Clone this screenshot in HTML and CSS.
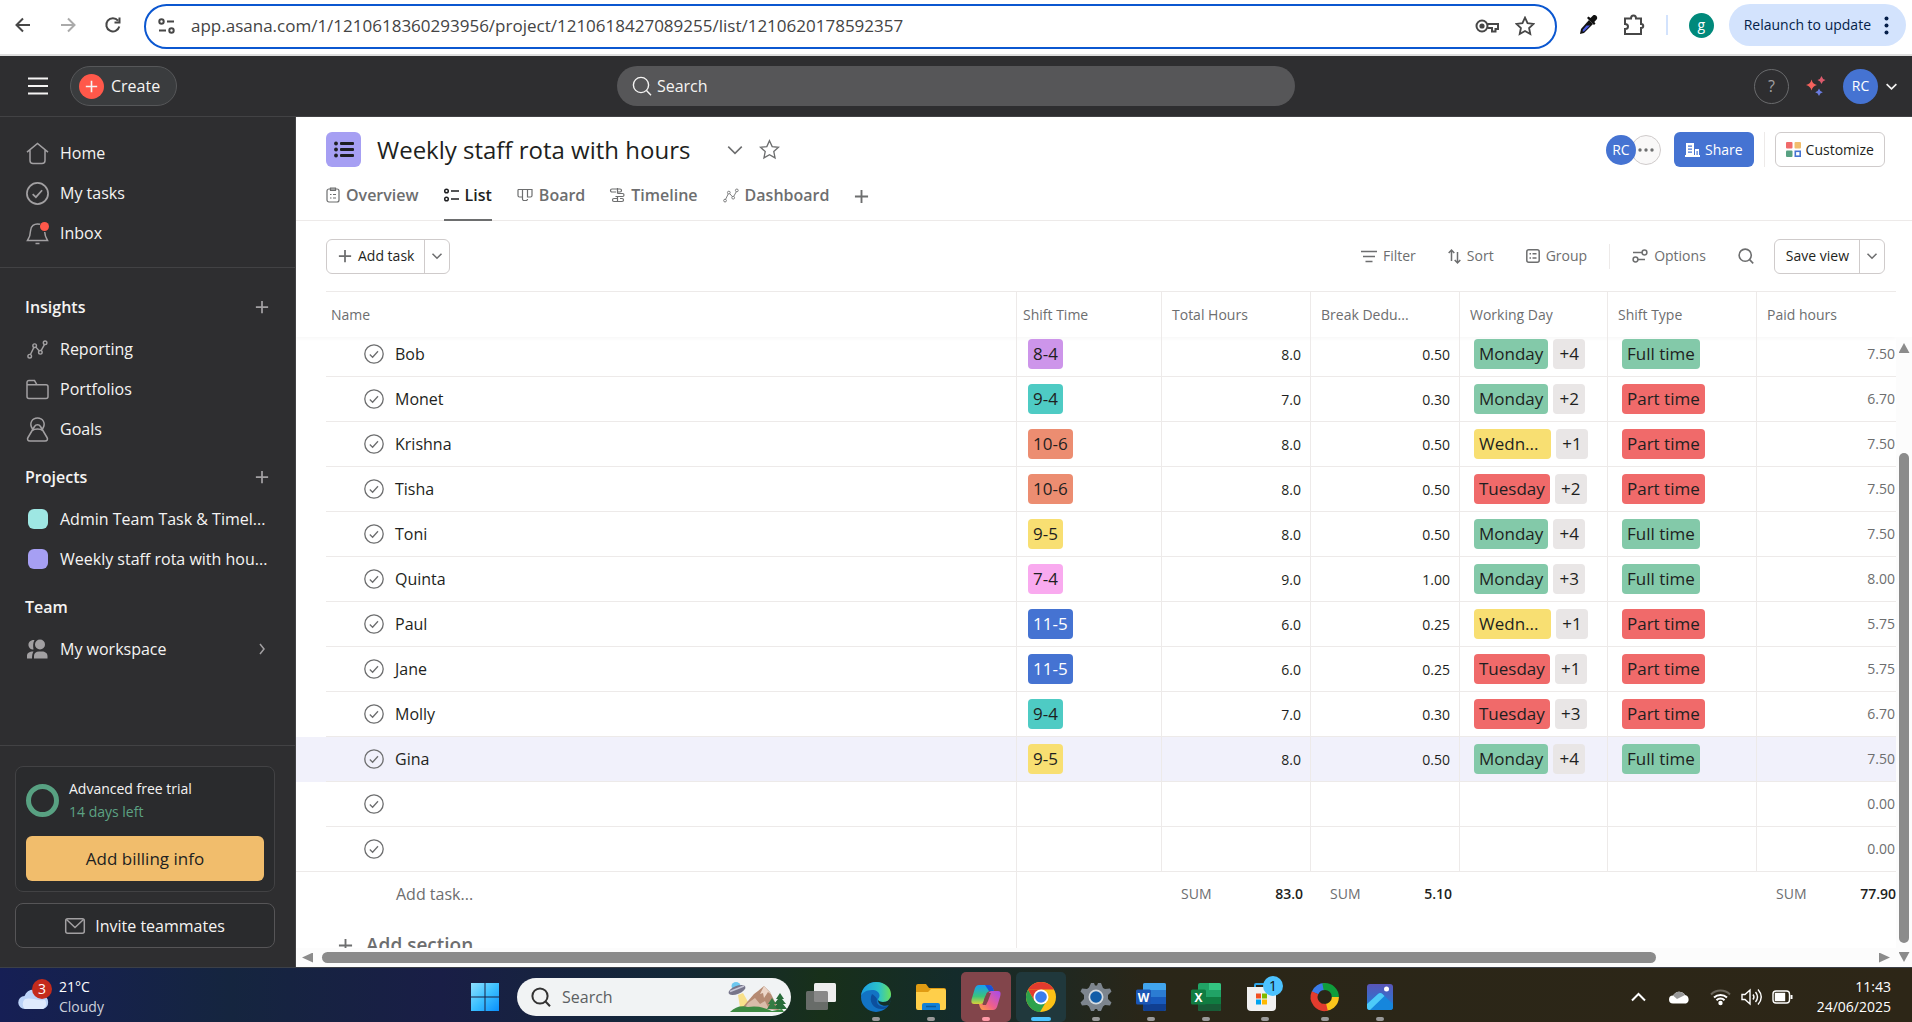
FILE: index.html
```html
<!DOCTYPE html>
<html lang="en">
<head>
<meta charset="utf-8">
<title>Weekly staff rota with hours - Asana</title>
<link rel="stylesheet" href="styles.css">
</head>
<body>
<svg class="defs" aria-hidden="true">
  <symbol id="check" viewBox="0 0 20 20"><circle cx="10" cy="10" r="9.2"/><path d="M5.8 10.600l2.800 2.600 5.400-6"/></symbol>
  <symbol id="plus" viewBox="0 0 16 16"><path d="M8 1v14M1 8h14"/></symbol>
  <symbol id="chev" viewBox="0 0 16 16"><path d="M2 5l6 6 6-6"/></symbol>
  <symbol id="lens" viewBox="0 0 20 20"><circle cx="9" cy="9" r="7.6"/><path d="M14.500 14.500l4.500 4.700"/></symbol>
  <symbol id="star" viewBox="0 0 22 22"><path d="M11 1.800l2.800 6.100 6.600.8-4.900 4.500 1.300 6.600-5.800-3.300-5.800 3.300 1.300-6.600L1.600 8.700l6.600-.8z"/></symbol>
  <symbol id="chart" viewBox="0 0 22 20"><circle cx="2.800" cy="17" r="1.900"/><circle cx="8" cy="6" r="1.900"/><circle cx="14" cy="13" r="1.900"/><circle cx="19" cy="3" r="1.900"/><path d="M3.600 15.200l3.600-7.400M9.300 7.500l3.600 4.100M14.800 11.200l3.500-6.400"/></symbol>
</svg>

<header class="browser">
  <button class="ib" aria-label="Back"><svg width="16" height="16" viewBox="0 0 16 16" class="s2"><path d="M15 8H2M8 1.500L1.500 8 8 14.500"/></svg></button>
  <button class="ib dim" aria-label="Forward"><svg width="16" height="16" viewBox="0 0 16 16" class="s2"><path d="M1 8h13M8 1.500L14.500 8 8 14.500"/></svg></button>
  <button class="ib" aria-label="Reload"><svg width="16" height="16" viewBox="0 0 16 16" class="s2"><path d="M14.300 9.500A6.600 6.600 0 1 1 13 3.600M14.500.5v5h-5"/></svg></button>
  <div class="omnibox">
    <svg width="17" height="16" viewBox="0 0 17 16" class="s2"><circle cx="3.500" cy="3.500" r="2.200"/><path d="M9 3.500h7M1 12.500h7"/><circle cx="13.500" cy="12.500" r="2.200"/></svg>
    <input type="text" aria-label="Address" value="app.asana.com/1/1210618360293956/project/1210618427089255/list/1210620178592357">
    <button class="ib" aria-label="Passwords"><svg width="24" height="16" viewBox="0 0 24 16" class="s2"><circle cx="7" cy="8" r="5.500"/><circle cx="7" cy="8" r="1.600" fill="#444"/><path d="M12.500 6H23v5h-2.500v2.500H17V10h-4.500"/></svg></button>
    <button class="ib" aria-label="Bookmark"><svg width="20" height="20" class="s2"><use href="#star"/></svg></button>
  </div>
  <button class="ib picker" aria-label="Color picker"><svg width="20" height="22" viewBox="0 0 20 22"><path d="M2 20l1-5 8-9 4 4-9 9z" fill="#111"/><path d="M4.500 17.500l.5-2 3.500-4 3.500 0-6 6z" fill="#4a5be0"/><path d="M9 4l7 7 1.500-1.500-1.200-1.500L19 5c1-2-1.500-5-4-3.500L12.500 4 10.500 2.500z" fill="#111"/></svg></button>
  <button class="ib" aria-label="Extensions"><svg width="22" height="22" viewBox="0 0 22 22" class="s2"><path d="M2 4.500h6c0-4 5-4 5 0h5v5.500c3 0 3 4 0 4V20H2v-5c4 0 4-5 0-5z"/></svg></button>
  <span class="bar"></span>
  <button class="gava">g</button>
  <button class="relaunch">Relaunch to update<svg width="5" height="19" viewBox="0 0 5 19"><circle cx="2.500" cy="2.500" r="2"/><circle cx="2.500" cy="9.500" r="2"/><circle cx="2.500" cy="16.500" r="2"/></svg></button>
</header>

<div class="topbar">
  <div class="top-left">
    <button class="ib" aria-label="Menu"><svg width="20" height="18" viewBox="0 0 20 18" class="s2"><path d="M0 1.500h20M0 9h20M0 16.500h20"/></svg></button>
    <button class="create"><span><svg width="13" height="13" class="s2"><use href="#plus"/></svg></span>Create</button>
  </div>
  <label class="search"><svg width="20" height="20" class="s1"><use href="#lens"/></svg><input type="text" placeholder="Search" aria-label="Search"></label>
  <div class="top-right">
    <button class="help">?</button>
    <button class="ib" aria-label="AI"><svg width="20" height="20" viewBox="0 0 20 20"><path d="M5.500 3.500q1 4.500 5.500 5.500-4.500 1-5.500 5.500-1-4.500-5.500-5.500 4.500-1 5.500-5.500z" fill="#f5625d"/><path d="M15.500 0q.8 3.200 4 4-3.200.8-4 4-.8-3.200-4-4 3.200-.8 4-4z" fill="#dc5b6c"/><path d="M13 12.500q.8 3 3.800 3.800-3 .8-3.800 3.700-.8-2.900-3.800-3.700 3-.8 3.800-3.800z" fill="#6a7ce0"/></svg></button>
    <button class="ava big">RC</button>
    <svg width="13" height="13" class="s2"><use href="#chev"/></svg>
  </div>
</div>

<div class="app">
  <aside class="sidebar">
    <nav class="primary">
      <a href="#"><svg width="23" height="23" viewBox="0 0 23 23"><path d="M1 10.200L11.500 1.500 22 10.200M4 8v10.500a3 3 0 0 0 3 3h9a3 3 0 0 0 3-3V8"/></svg>Home</a>
      <a href="#"><svg width="23" height="23"><use href="#check"/></svg>My tasks</a>
      <a href="#"><svg width="23" height="23" viewBox="0 0 23 23"><path d="M14 2.300C8 .8 4.500 4.500 4.500 9c0 4-.5 5.500-3 9.500h20c-1.800-3-2.700-5-2.800-8.500M9.500 21.500h4"/><circle cx="18.500" cy="4.500" r="4.500" class="dot"/></svg>Inbox</a>
    </nav>
    <nav class="groups">
      <h2>Insights<button class="ib" aria-label="Add insight"><svg width="14" height="14" class="s2"><use href="#plus"/></svg></button></h2>
      <a href="#"><svg width="23" height="19"><use href="#chart"/></svg>Reporting</a>
      <a href="#"><svg width="23" height="21" viewBox="0 0 23 21"><path d="M1 17.500V3.500a2 2 0 0 1 2-2h5.500l2.500 4.300h9a2 2 0 0 1 2 2v9.700a2 2 0 0 1-2 2H3a2 2 0 0 1-2-2zM1 5.800h10"/></svg>Portfolios</a>
      <a href="#"><svg width="23" height="25" viewBox="0 0 23 25"><path d="M6.500 12C2.500 6 6.500 1 11.500 1S20.500 6 16.500 12M4 24c-2.500 0-3-1.800-2-3.500L8.500 9.500a3.500 3.500 0 0 1 6 0L21 20.500c1 1.700.5 3.500-2 3.500zM6.500 13.500c2-2 8-2 10 0"/></svg>Goals</a>
      <h2>Projects<button class="ib" aria-label="Add project"><svg width="14" height="14" class="s2"><use href="#plus"/></svg></button></h2>
      <a href="#"><i class="sw teal"></i><span>Admin Team Task &amp; Timel...</span></a>
      <a href="#"><i class="sw violet"></i><span>Weekly staff rota with hou...</span></a>
      <h2>Team</h2>
      <a href="#"><svg width="23" height="20" viewBox="0 0 23 20" class="solid"><circle cx="14" cy="5.500" r="5"/><path d="M8 1C0 1 1.500 11 7.500 10.500 7 8 6.800 3.500 8.500 1zM8 19.500V17c0-3 2-4.500 5-4.500h3c3 0 5.500 1.500 5.500 4.500v2.500zM1 19.500V17c0-3 2-4.500 6.500-4.500Q6 14.500 6 19.500z"/></svg>My workspace<svg width="14" height="14" viewBox="0 0 14 14" class="go s2"><path d="M5 2l4 5-4 5"/></svg></a>
    </nav>
    <div class="side-foot">
      <div class="trial">
        <div class="trial-top"><i class="ring"></i><p>Advanced free trial<small>14 days left</small></p></div>
        <button>Add billing info</button>
      </div>
      <button class="invite"><svg width="20" height="16" viewBox="0 0 20 16"><rect x=".7" y=".7" width="18.600" height="14.600" rx="2"/><path d="M1.500 1.500L10 9.500l8.500-8"/></svg>Invite teammates</button>
    </div>
  </aside>

  <main>
    <div class="head">
      <span class="picon"><svg width="20" height="17" viewBox="0 0 20 17"><circle cx="2" cy="2.500" r="1.900"/><circle cx="2" cy="8.500" r="1.900"/><circle cx="2" cy="14.500" r="1.900"/><rect x="6" y="1" width="14" height="3" rx="1"/><rect x="6" y="7" width="14" height="3" rx="1"/><rect x="6" y="13" width="14" height="3" rx="1"/></svg></span>
      <h1>Weekly staff rota with hours</h1>
      <button class="ib drop" aria-label="Project menu"><svg width="18" height="18" class="s1"><use href="#chev"/></svg></button>
      <button class="ib" aria-label="Favourite"><svg width="21" height="21" class="s1"><use href="#star"/></svg></button>
      <div class="people"><span class="ava">RC</span><button class="more" aria-label="More members"><svg width="16" height="4" viewBox="0 0 16 4"><circle cx="2" cy="2" r="1.700"/><circle cx="8" cy="2" r="1.700"/><circle cx="14" cy="2" r="1.700"/></svg></button></div>
      <button class="share"><svg width="15" height="14" viewBox="0 0 15 14"><path fill="#fff" fill-rule="evenodd" d="M1 0h8v12h1V6h4v6h1v2H0v-2h1zM3 2.500v1.300h4V2.500zM3 5.500v1.300h4V5.500zM3 8.500v1.300h4V8.500zM11.500 8v4h1.200V8z"/></svg>Share</button>
      <span class="sep tall"></span>
      <button class="btn customize"><svg width="15" height="15" viewBox="0 0 15 15"><rect width="6.500" height="6.500" rx="1" fill="#f06a6a"/><rect x="8.500" width="6.500" height="6.500" rx="1" fill="#f1bd6c"/><rect y="8.500" width="6.500" height="6.500" rx="1" fill="#58a182"/><rect x="9.300" y="9.300" width="4.900" height="4.900" fill="none" stroke="#4573d2" stroke-width="1.600"/></svg>Customize</button>
    </div>
    <nav class="tabs">
      <a href="#"><svg width="14" height="16" viewBox="0 0 14 16"><rect x="1" y="2" width="12" height="13" rx="2"/><path d="M4.500 3.300V1h5v2.300zM4 7.500h1.500M7 7.500h3M4 11h1.500M7 11h3"/></svg>Overview</a>
      <a href="#" class="on"><svg width="15" height="14" viewBox="0 0 15 14"><circle cx="2.500" cy="3" r="1.800"/><circle cx="2.500" cy="11" r="1.800"/><path d="M7 3h8M7 11h8"/></svg>List</a>
      <a href="#"><svg width="16" height="14" viewBox="0 0 16 14"><path d="M1 1.500h14v6a1.500 1.500 0 0 1-1.500 1.500h-3V1.500M5.500 1.500v9.500A1.500 1.500 0 0 0 7 12.500h2a1.500 1.500 0 0 0 1.500-1.500M5.500 9h-3A1.500 1.500 0 0 1 1 7.500v-6"/></svg>Board</a>
      <a href="#"><svg width="15" height="14" viewBox="0 0 15 14"><path d="M6 4H2a1.400 1.400 0 0 1 0-3h8a1.400 1.400 0 0 1 0 3H8M7.500 0v5.500M7.500 5.500h5a1.400 1.400 0 0 1 0 3h-7M7.500 8.500V14M7.500 10.500H4a1.400 1.400 0 0 0 0 3h8a1.400 1.400 0 0 0 0-3h-2"/></svg>Timeline</a>
      <a href="#"><svg width="16" height="15"><use href="#chart"/></svg>Dashboard</a>
      <button class="ib" aria-label="Add tab"><svg width="15" height="15" class="s2"><use href="#plus"/></svg></button>
    </nav>
    <div class="tools">
      <div class="split"><button><svg width="14" height="14" class="s2"><use href="#plus"/></svg>Add task</button><button class="arrow" aria-label="Add task options"><svg width="12" height="12" class="s2"><use href="#chev"/></svg></button></div>
      <div class="filters">
        <button><svg width="16" height="13" viewBox="0 0 16 13"><path d="M0 1.500h16M2 6.500h12M4.500 11.500h7"/></svg>Filter</button>
        <button><svg width="13" height="15" viewBox="0 0 13 15"><path d="M3.500 12V1.500M.7 4L3.500 1l2.800 3M9.500 3v10.500M6.700 11l2.800 3 2.800-3"/></svg>Sort</button>
        <button><svg width="14" height="14" viewBox="0 0 14 14"><rect x=".8" y=".8" width="12.400" height="12.400" rx="2"/><path d="M3.500 4.800H5M6.500 4.800h4M3.500 9H5M6.500 9h4"/></svg>Group</button>
        <span class="sep"></span>
        <button><svg width="16" height="14" viewBox="0 0 16 14"><circle cx="12.500" cy="3.500" r="2.400"/><path d="M1 3.500h9"/><circle cx="3.500" cy="10.500" r="2.400"/><path d="M6 10.500h7"/></svg>Options</button>
        <button aria-label="Search tasks"><svg width="16" height="16" class="heavy"><use href="#lens"/></svg></button>
      </div>
      <div class="split"><button>Save view</button><button class="arrow" aria-label="Save view options"><svg width="12" height="12" class="s2"><use href="#chev"/></svg></button></div>
    </div>

    <div class="pane">
      <div class="list">
        <table>
          <colgroup><col class="c-gut"><col><col class="c-shift"><col class="c-w"><col class="c-w"><col class="c-day"><col class="c-w"><col class="c-paid"></colgroup>
          <thead><tr><th class="gut"></th><th class="name">Name</th><th class="shift">Shift Time</th><th>Total Hours</th><th>Break Dedu...</th><th>Working Day</th><th>Shift Type</th><th>Paid hours</th></tr></thead>
          <tbody>
            <tr class="under"><td class="gut"></td><td class="name"><div><button class="tick" aria-label="Complete"><svg><use href="#check"/></svg></button>Bob</div></td><td><b class="tag purple">8-4</b></td><td class="num">8.0</td><td class="num">0.50</td><td class="day"><b class="tag green">Monday</b><b class="tag grey">+4</b></td><td class="day"><b class="tag green">Full time</b></td><td class="paid">7.50</td></tr>
            <tr><td class="gut"></td><td class="name"><div><button class="tick" aria-label="Complete"><svg><use href="#check"/></svg></button>Monet</div></td><td><b class="tag aqua">9-4</b></td><td class="num">7.0</td><td class="num">0.30</td><td class="day"><b class="tag green">Monday</b><b class="tag grey">+2</b></td><td class="day"><b class="tag red">Part time</b></td><td class="paid">6.70</td></tr>
            <tr><td class="gut"></td><td class="name"><div><button class="tick" aria-label="Complete"><svg><use href="#check"/></svg></button>Krishna</div></td><td><b class="tag orange">10-6</b></td><td class="num">8.0</td><td class="num">0.50</td><td class="day"><b class="tag yellow cut">Wedn...</b><b class="tag grey">+1</b></td><td class="day"><b class="tag red">Part time</b></td><td class="paid">7.50</td></tr>
            <tr><td class="gut"></td><td class="name"><div><button class="tick" aria-label="Complete"><svg><use href="#check"/></svg></button>Tisha</div></td><td><b class="tag orange">10-6</b></td><td class="num">8.0</td><td class="num">0.50</td><td class="day"><b class="tag red">Tuesday</b><b class="tag grey">+2</b></td><td class="day"><b class="tag red">Part time</b></td><td class="paid">7.50</td></tr>
            <tr><td class="gut"></td><td class="name"><div><button class="tick" aria-label="Complete"><svg><use href="#check"/></svg></button>Toni</div></td><td><b class="tag yellow">9-5</b></td><td class="num">8.0</td><td class="num">0.50</td><td class="day"><b class="tag green">Monday</b><b class="tag grey">+4</b></td><td class="day"><b class="tag green">Full time</b></td><td class="paid">7.50</td></tr>
            <tr><td class="gut"></td><td class="name"><div><button class="tick" aria-label="Complete"><svg><use href="#check"/></svg></button>Quinta</div></td><td><b class="tag pink">7-4</b></td><td class="num">9.0</td><td class="num">1.00</td><td class="day"><b class="tag green">Monday</b><b class="tag grey">+3</b></td><td class="day"><b class="tag green">Full time</b></td><td class="paid">8.00</td></tr>
            <tr><td class="gut"></td><td class="name"><div><button class="tick" aria-label="Complete"><svg><use href="#check"/></svg></button>Paul</div></td><td><b class="tag blue">11-5</b></td><td class="num">6.0</td><td class="num">0.25</td><td class="day"><b class="tag yellow cut">Wedn...</b><b class="tag grey">+1</b></td><td class="day"><b class="tag red">Part time</b></td><td class="paid">5.75</td></tr>
            <tr><td class="gut"></td><td class="name"><div><button class="tick" aria-label="Complete"><svg><use href="#check"/></svg></button>Jane</div></td><td><b class="tag blue">11-5</b></td><td class="num">6.0</td><td class="num">0.25</td><td class="day"><b class="tag red">Tuesday</b><b class="tag grey">+1</b></td><td class="day"><b class="tag red">Part time</b></td><td class="paid">5.75</td></tr>
            <tr><td class="gut"></td><td class="name"><div><button class="tick" aria-label="Complete"><svg><use href="#check"/></svg></button>Molly</div></td><td><b class="tag aqua">9-4</b></td><td class="num">7.0</td><td class="num">0.30</td><td class="day"><b class="tag red">Tuesday</b><b class="tag grey">+3</b></td><td class="day"><b class="tag red">Part time</b></td><td class="paid">6.70</td></tr>
            <tr class="sel"><td class="gut"></td><td class="name"><div><button class="tick" aria-label="Complete"><svg><use href="#check"/></svg></button>Gina</div></td><td><b class="tag yellow">9-5</b></td><td class="num">8.0</td><td class="num">0.50</td><td class="day"><b class="tag green">Monday</b><b class="tag grey">+4</b></td><td class="day"><b class="tag green">Full time</b></td><td class="paid">7.50</td></tr>
            <tr><td class="gut"></td><td class="name"><div><button class="tick" aria-label="Complete"><svg><use href="#check"/></svg></button></div></td><td></td><td></td><td></td><td></td><td></td><td class="paid">0.00</td></tr>
            <tr class="last"><td class="gut"></td><td class="name"><div><button class="tick" aria-label="Complete"><svg><use href="#check"/></svg></button></div></td><td></td><td></td><td></td><td></td><td></td><td class="paid">0.00</td></tr>
          </tbody>
          <tfoot>
            <tr><td class="gut"></td><td class="name"><button class="addtask">Add task...</button></td><td></td><td class="sum"><div><span>SUM</span>83.0</div></td><td class="sum"><div><span>SUM</span>5.10</div></td><td></td><td></td><td class="sum edge"><div><span>SUM</span>77.90</div></td></tr>
            <tr class="section"><td class="gut"></td><td class="name"><button class="addsec"><svg width="15" height="15" class="s2"><use href="#plus"/></svg>Add section</button></td><td colspan="6"></td></tr>
          </tfoot>
        </table>
      </div>
      <div class="vbar"><i class="tri up"></i><i class="vthumb"></i><i class="tri down"></i></div>
      <div class="hbar"><i class="tri left"></i><i class="hthumb"></i><i class="tri right"></i></div>
    </div>
  </main>
</div>

<footer class="taskbar">
  <div class="weather">
    <svg width="34" height="32" viewBox="0 0 34 32"><path d="M7 28a6.500 6.500 0 0 1-.5-13A10 10 0 0 1 25 14.500 7 7 0 0 1 25 28z" fill="#bcd3f8"/><path d="M7 28a6.500 6.500 0 0 1 0-10c6-2 12 2 20 1a6 6 0 0 1-2 9z" fill="#dfeafd"/><circle cx="24" cy="8" r="10" fill="#c42b1c"/><text x="24" y="13" text-anchor="middle" fill="#fff" font-size="14">3</text></svg>
    <p>21°C<small>Cloudy</small></p>
  </div>
  <div class="dock">
    <button aria-label="Start"><svg width="30" height="30" viewBox="0 0 30 30"><defs><linearGradient id="win" x2="1" y2="1"><stop stop-color="#8fe0ff"/><stop offset=".5" stop-color="#3cc0ff"/><stop offset="1" stop-color="#0a8ffc"/></linearGradient></defs><path fill="url(#win)" d="M1 1h13.500v13.500H1zM15.500 1H29v13.500H15.500zM1 15.500h13.500V29H1zM15.500 15.500H29V29H15.500z"/></svg></button>
    <label class="tsearch"><svg width="20" height="20" class="s2"><use href="#lens"/></svg><input type="text" placeholder="Search" aria-label="Search Windows">
      <svg width="59" height="32" viewBox="0 0 59 32"><path d="M10 14l5-2 8 14H12z" fill="#f8e08a"/><path d="M14 27L26 13l4-3 6-5 6 6 9 18z" fill="#b58a72"/><path d="M36 5l-4 8 3-1 1 5 4-6 4 3z" fill="#ecd6c8"/><path d="M20 22l7-5 5 6 5-3 4 8H16z" fill="#d9bca9"/><path d="M2 31q8-8 18-5 12-2 24 4l10-2 2 3z" fill="#3d8a42"/><path d="M52 12l-4 6h2l-4 5h3l-4 5h14l-4-5h3l-4-5h2z" fill="#276b39"/><path d="M44 17l-4 6h2l-3 5h10l-3-5h2z" fill="#347c43"/><ellipse cx="8" cy="5" rx="4.500" ry="4" fill="#6cc7ef"/><ellipse cx="9" cy="9" rx="9" ry="4" transform="rotate(-22 9 9)" fill="#77758a"/><path d="M2 10.500L16 5" stroke="#c9c8d8" stroke-width="1.500"/></svg></label>
    <button aria-label="Task view"><svg width="32" height="30" viewBox="0 0 32 30"><rect x="9" y="1" width="22" height="19" rx="1.500" fill="#eee"/><rect x="1" y="9" width="22" height="19" rx="1.500" fill="#777" opacity=".85"/></svg></button>
    <button class="run" aria-label="Edge"><svg width="30" height="30" viewBox="0 0 30 30"><defs><linearGradient id="edge" x2="1"><stop stop-color="#1b9de2"/><stop offset=".6" stop-color="#2cc3c9"/><stop offset="1" stop-color="#6be05a"/></linearGradient></defs><circle cx="15" cy="15" r="15" fill="#1273c4"/><path d="M0 14C1 5 8 0 15 0c9 0 15 6 15 12 0 5-3 8-8 8-3 0-5-1-5-2.500 0-1 1.500-1.500 1.500-4C18.500 10 15 8 11 8 5 8 1 11 0 14z" fill="url(#edge)"/><path d="M11 12c-4 8 2 16 11 15 3-.5 5-2.500 6-4-4 3-14 2-12-6-1-2-3-4-5-5z" fill="#0c4f9e"/><path d="M17 17.500c0 1.500 2 2.500 5 2.500 4 0 6.500-2 7.500-5l1 3-2.500 5c-5 2-11 0-11-5.500z" fill="#14302a"/></svg></button>
    <button class="run" aria-label="File Explorer"><svg width="32" height="28" viewBox="0 0 32 28"><path d="M1 3a2 2 0 0 1 2-2h8l3 4h15a2 2 0 0 1 2 2v5H1z" fill="#e09b12"/><path d="M1 9h12l3-3h13a2 2 0 0 1 2 2v17a2 2 0 0 1-2 2H3a2 2 0 0 1-2-2z" fill="#ffcf4a"/><path d="M7 27v-5a2 2 0 0 1 2-2h14a2 2 0 0 1 2 2v5z" fill="#1180d8"/><path d="M11 23.500h10" stroke="#0b5a9c" stroke-width="1.500"/></svg></button>
    <button class="run tile rose" aria-label="Copilot"><svg width="30" height="27" viewBox="0 0 30 27"><defs><linearGradient id="cpa" x2="0" y2="1"><stop stop-color="#179ef5"/><stop offset=".6" stop-color="#3ac47b"/><stop offset="1" stop-color="#d9d13a"/></linearGradient><linearGradient id="cpb" x1="1" x2="0" y2="1"><stop stop-color="#a44af0"/><stop offset=".6" stop-color="#f0608a"/><stop offset="1" stop-color="#ffa53c"/></linearGradient></defs><path d="M8 1h10c3 0 4 3 5 6h-3c-3 0-4 1-5 4l-2 6c-1 3-2 3-4 3H3c-3 0-3-3-2-6L4 4c1-2 2-3 4-3z" fill="url(#cpa)"/><path d="M22 26H12c-2 0-3-2-4-6h2c3 0 4-1 5-4l2-6c1-2 2-3 4-3h6c3 0 3 3 2 6l-3 10c-1 2-2 3-4 3z" fill="url(#cpb)"/><path d="M14 1h4c3 0 4 3 5 6h-5z" fill="#1c50d8"/><path d="M13.500 14l2.500-5h4l-3 8-2 4h-3.500z" fill="#82454b"/></svg></button>
    <button class="run tile active" aria-label="Chrome"><svg width="30" height="30" viewBox="0 0 30 30"><circle cx="15" cy="15" r="15" fill="#fbc116"/><path d="M2 7.500A15 15 0 0 1 28 7.500H15z" fill="#e33b2e"/><path d="M2 7.500A15 15 0 0 0 14 30l6.500-11L8.500 18.700z" fill="#2da24c"/><path d="M2 7.500l6.500 11.200L15 7.500z" fill="#e33b2e"/><circle cx="15" cy="15" r="7.500" fill="#fff"/><circle cx="15" cy="15" r="5.800" fill="#3b7ded"/></svg></button>
    <button class="run" aria-label="Settings"><svg width="30" height="30" viewBox="0 0 30 30"><path d="M11 1h2l1 2.500h2L17 1h3l2 5 2 1 5-.5 1.500 3L27 13v4l3.500 3.500-1.500 3-5-.5-2 1.500-2 4.500h-3l-1-2h-2l-1 2h-3l-2-4.500L6 23l-5 .5-1.500-3L3 17v-4L-.5 9.500 1 6.500 6 7l2-1.500L10 1z" fill="#7d858e"/><circle cx="15" cy="15" r="7.500" fill="#d5dbe0"/><circle cx="15" cy="15" r="5.800" fill="#125da8"/></svg></button>
    <button class="run" aria-label="Word"><svg width="30" height="28" viewBox="0 0 30 28"><rect x="7" width="23" height="28" rx="2" fill="#2b7cd3"/><path d="M7 2a2 2 0 0 1 2-2h19a2 2 0 0 1 2 2v5H7z" fill="#41a5ee"/><path d="M7 14h23v7H7z" fill="#185abd"/><path d="M7 21h23v5a2 2 0 0 1-2 2H9a2 2 0 0 1-2-2z" fill="#103f91"/><rect y="6.500" width="15" height="15" rx="1.500" fill="#1b56b5"/><text x="7.500" y="18.500" text-anchor="middle" fill="#fff" font-size="12" font-weight="700">W</text></svg></button>
    <button class="run" aria-label="Excel"><svg width="30" height="28" viewBox="0 0 30 28"><rect x="7" width="23" height="28" rx="2" fill="#21a366"/><path d="M18 0h10a2 2 0 0 1 2 2v5H18z" fill="#33c481"/><path d="M7 14h23v7H7z" fill="#107c41"/><path d="M7 21h23v5a2 2 0 0 1-2 2H9a2 2 0 0 1-2-2z" fill="#185c37"/><rect y="6.500" width="15" height="15" rx="1.500" fill="#107c41"/><text x="7.500" y="18.500" text-anchor="middle" fill="#fff" font-size="12" font-weight="700">X</text></svg></button>
    <button class="run wide" aria-label="Microsoft Store"><svg width="38" height="36" viewBox="0 0 38 36"><path d="M9 12V9a1 1 0 0 1 1-1h12" fill="none" stroke="#2ea6ea" stroke-width="2"/><path d="M1 11h29v20a4 4 0 0 1-4 4H5a4 4 0 0 1-4-4z" fill="#f1f1f1"/><path fill="#f25022" d="M10 17.500h5v5h-5z"/><path fill="#7fba00" d="M16 17.500h5v5h-5z"/><path fill="#00a4ef" d="M10 23.500h5v5h-5z"/><path fill="#ffb900" d="M16 23.500h5v5h-5z"/><circle cx="27" cy="10" r="10" fill="#4cc2ff"/><text x="27" y="15" text-anchor="middle" fill="#111" font-size="14">1</text></svg></button>
    <button class="run" aria-label="Web companion"><svg width="28" height="28" viewBox="0 0 28 28" fill="none" stroke-width="7"><path d="M4 10A10.500 10.500 0 0 1 14 3.500" stroke="#3a7be8"/><path d="M12 3.700A10.500 10.500 0 0 1 24.400 15" stroke="#0f9d3c"/><path d="M24.400 14A10.500 10.500 0 0 1 12 24.300" stroke="#fbc51b"/><path d="M16 24.300A10.500 10.500 0 0 1 4 9.800" stroke="#e23c2e"/></svg></button>
    <button class="run" aria-label="Photos"><svg width="26" height="26" viewBox="0 0 26 26"><defs><linearGradient id="ph" x2="0" y2="1"><stop stop-color="#5a55b8"/><stop offset="1" stop-color="#1c7fd8"/></linearGradient></defs><rect width="26" height="26" rx="3" fill="url(#ph)"/><path d="M0 20l11-10c1.500-1.500 3-1.500 4.500 0L26 20v3a3 3 0 0 1-3 3H3a3 3 0 0 1-3-3z" fill="#1686dc"/><path d="M0 20l11-10c1.500-1.500 3-1.500 4.500 0l2 2L3 26a3 3 0 0 1-3-3z" fill="#4dcaf8"/><circle cx="19.500" cy="5" r="2.500" fill="#fff"/></svg></button>
  </div>
  <div class="tray">
    <svg width="15" height="10" viewBox="0 0 15 10" class="s2"><path d="M1 8.500l6.500-6.500L14 8.500"/></svg>
    <svg width="21" height="14" viewBox="0 0 21 14"><path d="M4 13.500a4 4 0 0 1 0-8A7 7 0 0 1 16 5a4.500 4.500 0 0 1 1 8.500z" fill="#fff"/><path d="M4 5.500A7 7 0 0 1 16 5L8 9z" fill="#999"/></svg>
    <svg width="21" height="16" viewBox="0 0 21 16" class="s2"><path d="M1 5.500a13.500 13.500 0 0 1 19 0" opacity=".3"/><path d="M4 8.500a9.500 9.500 0 0 1 13 0M6.500 11.300a5.600 5.600 0 0 1 8 0"/><circle cx="10.500" cy="14" r="1.200" fill="#fff"/></svg>
    <svg width="21" height="18" viewBox="0 0 21 18" class="s1"><path d="M1 6.500h3L9 2v14l-5-4.500H1zM12 6.500q2 2.500 0 5M14.500 4q4 5 0 10M17 1.500q6.500 7.500 0 15"/></svg>
    <svg width="21" height="14" viewBox="0 0 21 14" class="s1"><rect x="1" y="1" width="16.500" height="12" rx="3"/><rect x="3.500" y="3.500" width="9" height="7" fill="#fff"/><path d="M19.500 5v4" stroke-width="2"/></svg>
    <p>11:43<br>24/06/2025</p>
  </div>
</footer>
</body>
</html>
```
FILE: styles.css
```css
* { box-sizing: border-box; }
body {
  margin: 0;
  height: 100vh;
  display: flex;
  flex-direction: column;
  overflow: hidden;
  font-family: "Open Sans", "Noto Sans", sans-serif;
  font-size: 16px;
  line-height: 24px;
  color: #1e1f21;
  background: #fff;
}
button, input { font: inherit; color: inherit; background: none; border: 0; padding: 0; margin: 0; min-width: 0; }
input { outline: 0; }
a { color: inherit; text-decoration: none; }
h1, h2, p { margin: 0; }
svg { display: block; flex: none; fill: none; stroke: none; overflow: visible; }
i { display: block; }
.defs { position: absolute; width: 0; height: 0; }
.ib { display: flex; align-items: center; }
.s1 { stroke: currentColor; stroke-width: 1.4; }
.s2 { stroke: currentColor; stroke-width: 2; }

/* Browser toolbar */
.browser { flex: none; display: flex; align-items: center; height: 56px; padding: 0 6px 4px 15px; gap: 29px; border-bottom: 2px solid #dedede; color: #474747; }
.dim { color: #aaa; }
.omnibox { flex: 1; display: flex; align-items: center; gap: 16px; height: 45px; margin: 2px -8px 0 -6px; padding: 0 20px 0 12px; border: 2px solid #0b57d0; border-radius: 23px; }
.omnibox input { flex: 1; color: #444; font-size: 17px; }
.picker { margin-right: -4px; }
.bar { width: 2px; height: 20px; margin: 0 -8px; background: #d3e3fd; }
.gava { width: 25px; height: 25px; border-radius: 50%; background: #00897b; color: #fff; font-size: 14px; line-height: 22px; margin-right: -14px; }
.relaunch { display: flex; align-items: center; gap: 13px; height: 42px; padding: 0 17px 0 15px; border-radius: 21px; background: #d3e3fd; color: #041e49; font-size: 14px; white-space: nowrap; }
.relaunch svg { fill: #041e49; }

/* Application bar */
.topbar { flex: none; display: flex; justify-content: space-between; align-items: center; height: 61px; padding: 0 14px; background: #2e2e30; border-bottom: 1px solid #424244; color: #f5f4f3; }
.top-left, .top-right { flex: 1; display: flex; align-items: center; }
.top-left { gap: 22px; padding-left: 14px; }
.top-right { justify-content: flex-end; gap: 17px; padding-left: 14px; }
.top-right > :last-child { margin-left: -10px; }
.create { display: flex; align-items: center; gap: 7px; height: 40px; padding: 0 16px 0 8px; border: 1px solid #565759; border-radius: 20px; background: #3a3c3e; }
.create span { display: grid; place-items: center; width: 25px; height: 25px; border-radius: 50%; background: #ff584a; }
.search { display: flex; align-items: center; gap: 5px; width: 36%; height: 40px; padding: 0 15px; border-radius: 20px; background: #565658; }
.search input { flex: 1; }
.search input::placeholder { color: #f5f4f3; opacity: 1; }
.help { width: 35px; height: 35px; border: 1px solid #6a6b6d; border-radius: 50%; color: #a2a0a2; }
.ava { display: grid; place-items: center; width: 30px; height: 30px; border-radius: 50%; background: #4573d2; color: #fff; font-size: 14px; }
.ava.big { width: 35px; height: 35px; }

.app { flex: 1; min-height: 0; display: flex; }

/* Sidebar */
.sidebar { flex: none; width: 296px; display: flex; flex-direction: column; background: #2e2e30; border-right: 1px solid #424244; color: #f5f4f3; }
.primary { padding: 16px 0 14px; border-bottom: 1px solid #424244; }
.sidebar a { display: flex; align-items: center; gap: 11px; height: 40px; padding: 0 18px 0 26px; white-space: nowrap; }
.sidebar a svg, .invite svg { stroke: #a2a0a2; stroke-width: 1.5; }
.sidebar .dot { fill: #ff584a; stroke: none; }
.sidebar a .solid { fill: #a2a0a2; stroke: none; }
.sidebar a .go { margin-left: auto; margin-right: 8px; }
.groups { flex: 1; padding-top: 19px; }
.groups h2 { display: flex; justify-content: space-between; align-items: center; height: 42px; padding: 0 26px 2px 25px; font-size: 16px; font-weight: 600; }
.groups a + h2 { margin-top: 8px; }
.groups h2 svg { color: #a2a0a2; }
.sw { flex: none; width: 20px; height: 20px; border-radius: 6px; margin: 0 1px 0 2px; }
.teal { background: #9ee7e3; }
.violet { background: #a69ff3; }
.side-foot { display: flex; flex-direction: column; gap: 11px; padding: 20px 20px 19px 15px; border-top: 1px solid #424244; }
.trial { padding: 10px; border: 1px solid #424244; border-radius: 8px; background: #2a2b2d; }
.trial-top { display: flex; align-items: center; gap: 10px; height: 46px; margin-bottom: 13px; }
.ring { width: 33px; height: 33px; border: 5px solid #58a182; border-radius: 50%; }
.trial p { font-size: 14px; line-height: 23px; }
small { display: block; font-size: 14px; }
.trial small { color: #5da283; }
.trial button { width: 100%; height: 45px; border-radius: 6px; background: #f1bd6c; color: #1e1f21; font-size: 17px; }
.invite { display: flex; justify-content: center; align-items: center; gap: 10px; height: 45px; border: 1px solid #565557; border-radius: 8px; background: #2a2b2d; }

/* Project header */
main { flex: 1; min-width: 0; display: flex; flex-direction: column; }
.head { flex: none; display: flex; align-items: center; height: 50px; padding: 15px 27px 0 30px; }
.picon { display: grid; place-items: center; width: 35px; height: 35px; border-radius: 6px; background: #a69ff3; }
.picon svg { fill: #1e1f21; }
h1 { margin-left: 16px; font-size: 24px; line-height: 32px; font-weight: 500; white-space: nowrap; }
.head .ib { color: #6d6e6f; }
.drop { margin: 0 15px 0 36px; }
.people { display: flex; margin-left: auto; margin-right: 13px; }
.people .ava { z-index: 1; }
.more { display: grid; place-items: center; width: 30px; height: 30px; margin-left: -5px; border: 1px solid #cfcbcb; border-radius: 50%; background: #f9f8f8; }
.more svg { fill: #6d6e6f; }
.share, .btn { display: flex; align-items: center; gap: 5px; height: 35px; padding: 0 11px; border-radius: 6px; font-size: 14px; }
.share { background: #4573d2; color: #fff; }
.btn { padding: 0 10px; border: 1px solid #cfcbcb; }
.sep { width: 1px; height: 25px; background: #edeae9; }
.sep.tall { height: 35px; margin: 0 10px; }

.tabs { flex: none; display: flex; align-items: center; gap: 25px; height: 54px; padding: 5px 30px 0; border-bottom: 1px solid #edeae9; color: #6d6e6f; font-weight: 600; }
.tabs a { display: flex; align-items: center; gap: 6px; height: 49px; border-bottom: 2px solid transparent; }
.tabs svg { stroke: currentColor; stroke-width: 1.2; }
.tabs .on svg { stroke-width: 1.5; }
.tabs .s2 { stroke-width: 2; }
.tabs .on { color: #1e1f21; border-color: #6d6e6f; }

.tools { flex: none; display: flex; align-items: center; height: 70px; padding: 0 27px 0 30px; font-size: 14px; }
.split { display: flex; height: 35px; border: 1px solid #cfcbcb; border-radius: 6px; }
.split button { display: flex; align-items: center; gap: 6px; padding: 0 10px 0 11px; }
.split .arrow { padding: 0 6px; border-left: 1px solid #cfcbcb; }
.split svg { color: #6d6e6f; }
.filters { flex: 1; display: flex; justify-content: flex-end; align-items: center; gap: 0 32px; margin-right: 20px; font-weight: 500; color: #6d6e6f; }
.filters button { display: flex; align-items: center; gap: 6px; }
.filters .sep { margin: 0 -10px; }
.filters svg { stroke: currentColor; stroke-width: 1.5; }
.filters .heavy { stroke-width: 2; }

/* Task list */
.pane { flex: 1; min-height: 0; display: grid; grid-template-columns: minmax(0, 1fr) 16px; grid-template-rows: minmax(0, 1fr) 19px; }
.list { overflow: hidden; }
table { width: 100%; table-layout: fixed; border-collapse: separate; border-spacing: 0; }
.c-gut { width: 30px; }
.c-shift { width: 145px; }
.c-w { width: 149px; }
.c-day { width: 148px; }
.c-paid { width: 139px; }
th { height: 46px; padding: 0 0 0 10px; text-align: left; font-size: 14px; font-weight: 400; color: #6d6e6f; border-top: 1px solid #edeae9; border-right: 1px solid #edeae9; white-space: nowrap; }
thead { box-shadow: 0 2px 4px #00000008; }
th.name { padding-left: 5px; }
th.shift { padding-left: 6px; }
th.gut { border: 0; }
td { height: 45px; padding: 0 0 7px 11px; vertical-align: bottom; border-right: 1px solid #edeae9; border-bottom: 1px solid #edeae9; line-height: 30px; white-space: nowrap; }
th:last-child, td:last-child { border-right: 0; }
.under td { height: 40px; }
tbody td.gut { border: 0; padding: 0; }
tbody .last td.gut { border-bottom: 1px solid #edeae9; }
td.name { padding-left: 38px; }
td.name div { display: flex; align-items: center; gap: 11px; height: 30px; }
.tick { width: 20px; height: 20px; color: #6d6e6f; }
.tick svg { width: 20px; height: 20px; stroke: currentColor; stroke-width: 1.3; }
td.day { padding-left: 14px; }
.num { padding-right: 9px; padding-bottom: 6px; text-align: right; font-size: 14px; }
.paid { padding-right: 1px; text-align: right; font-size: 14px; color: #6d6e6f; }
.sel td { background: #f1f1fb; }
.tag { display: inline-block; height: 30px; padding: 0 5px; border-radius: 4px; font-size: 17px; font-weight: 400; vertical-align: top; }
.tag + .tag { margin-left: 5px; }
.cut { min-width: 77px; }
.purple { background: #cd95ea; }
.aqua { background: #4ecbc4; }
.orange { background: #ec8d71; }
.yellow { background: #f8df72; }
.pink { background: #f9aaef; }
.blue { background: #4573d2; color: #fff; }
.green { background: #83c9a9; }
.red { background: #f06a6a; }
.grey { min-width: 32px; text-align: center; background: #e9e6e6; }
tfoot td { height: 48px; border: 0; padding-bottom: 11px; }
tfoot td.name { border-right: 1px solid #edeae9; padding-left: 40px; }
.addtask { display: block; padding-left: 30px; color: #6d6e6f; line-height: 30px; }
.sum { padding-left: 19px; padding-right: 8px; font-size: 14px; font-weight: 600; }
.sum div { display: flex; justify-content: space-between; }
.sum span { color: #6d6e6f; font-weight: 500; }
.sum.edge { padding-right: 0; }
tfoot tr.section td { padding-left: 12px; padding-bottom: 8px; }
.addsec { display: flex; align-items: center; gap: 13px; height: 30px; color: #6d6e6f; font-size: 19px; font-weight: 600; }

/* Scrollbars */
.vbar { grid-column: 2; grid-row: 1 / 3; display: flex; flex-direction: column; align-items: center; margin-top: 46px; padding: 6px 0 5px; background: #fcfcfc; }
.vthumb { width: 10px; flex: 0 1 490px; margin: auto 0 9px; border-radius: 5px; background: #8b8b8b; }
.hbar { grid-column: 1; grid-row: 2; display: flex; align-items: center; padding: 0 6px; background: #fcfcfc; }
.hthumb { height: 11px; width: 84%; margin: 0 auto 0 9px; border-radius: 6px; background: #8b8b8b; }
.tri { width: 11px; height: 10px; background: #8b8b8b; }
.up { clip-path: polygon(50% 0, 100% 100%, 0 100%); }
.down { clip-path: polygon(0 0, 100% 0, 50% 100%); }
.left { clip-path: polygon(100% 0, 100% 100%, 0 50%); }
.right { clip-path: polygon(0 0, 100% 50%, 0 100%); }

/* Windows taskbar */
.taskbar { flex: none; display: flex; align-items: center; height: 55px; padding: 0 21px 0 18px; border-top: 1px solid #3c4048; color: #fff; font-size: 14px; line-height: 20px; background: linear-gradient(90deg, #161f55, #15253f 12%, #191e46 23%, #142838 35%, #18301a 43%, #142b2b 50%, #2a2618 60%, #2d2617); }
.weather, .tray, .dock { display: flex; align-items: center; }
.weather { flex: none; width: 437px; gap: 7px; padding-top: 4px; }
.weather small { color: #ccd0da; }
.dock { height: 100%; }
.dock button { display: grid; place-items: center; width: 50px; height: 50px; margin: 4px 5px 0 0; position: relative; }
.dock button:first-child { width: 59px; }
.dock .wide { width: 70px; margin-left: -6px; margin-right: 0; padding-bottom: 6px; }
.run::after { content: ""; position: absolute; bottom: 1px; left: 50%; width: 8px; height: 4px; margin-left: -4px; border-radius: 2px; background: #999; }
.tile { border-radius: 5px; }
.rose { background: #82454b; }
.rose::after { background: #ff9aa8; }
.active { background: #20383c; }
.active::after { width: 20px; margin-left: -10px; background: #4cc2ff; }
.tsearch { display: flex; align-items: center; width: 274px; height: 38px; margin: 4px 5px 0 -2px; padding: 0 4px 0 14px; gap: 11px; border-radius: 19px; background: #f1f3f4; color: #333; font-size: 16px; }
.tsearch input { flex: 1; }
.tsearch input::placeholder { color: #5c5f62; opacity: 1; }
.tray { margin-left: auto; gap: 10px; padding-top: 4px; }
.tray svg:first-child { margin-right: 13px; }
.tray svg:nth-child(2) { margin-right: 10px; }
.tray p { margin-left: 10px; text-align: right; min-width: 78px; }
```
